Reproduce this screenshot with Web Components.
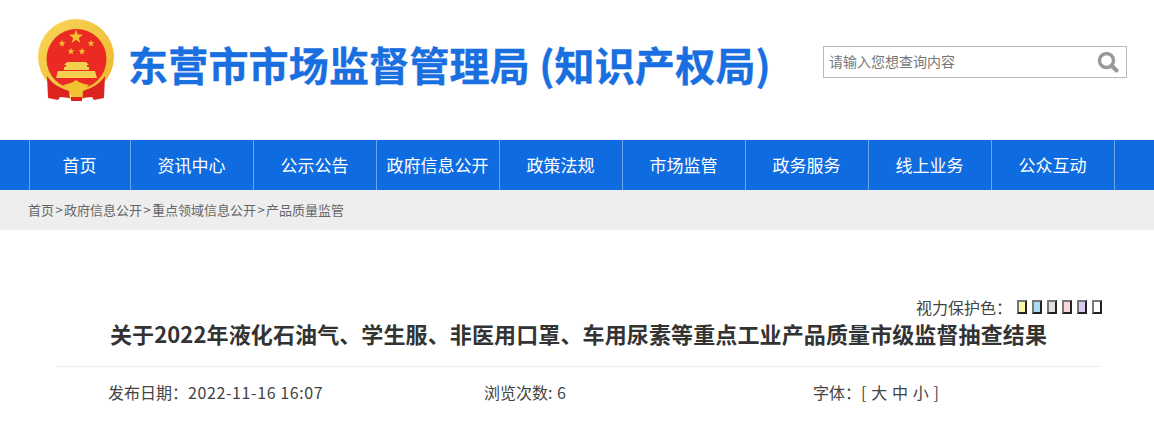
<!DOCTYPE html>
<html lang="zh">
<head>
<meta charset="utf-8">
<title>产品质量监管</title>
<style>
  html, body { margin: 0; padding: 0; background: #fff; overflow: hidden; }
  body { font-family: "Noto Sans CJK SC", "Liberation Sans", sans-serif; }
</style>
</head>
<body>
<site-header></site-header>
<site-nav></site-nav>
<bread-crumb></bread-crumb>
<article-head></article-head>

<script>
const CJK = '"Noto Sans CJK SC", "Liberation Sans", sans-serif';
const STAR = 'M0-1L.235-.324H.951L.371.124.588.809 0 .382-.588.809-.371.124-.951-.324H-.235Z';

class SiteHeader extends HTMLElement {
    connectedCallback() {
        const shadow = this.attachShadow({ mode: 'open' });
        shadow.innerHTML = `
      <style>
        :host { display: flex; height: 140px; box-sizing: border-box; align-items: flex-start; font-family: ${CJK}; }
        .emblem { width: 78px; height: 84px; margin: 18px 0 0 37px; flex: none; }
        h1 { margin: 35px 0 0 13px; font-size: 40px; line-height: 58px; font-weight: 700; color: #1a6fe0; white-space: nowrap; flex: none; letter-spacing: .2px; -webkit-text-stroke: .4px #1a6fe0; }
        .search { margin: 46px 27px 0 auto; width: 304px; height: 32px; box-sizing: border-box; border: 1px solid #bbb; display: flex; align-items: center; padding: 0 7px 0 5px; flex: none; }
        .search span { flex: 1; font-size: 14px; color: #777; position: relative; top: -1px; }
        svg { display: block; }
      </style>
      <svg class="emblem" viewBox="0 0 78 84">
        <defs>
          <linearGradient id="gold" x1="0" y1="0" x2="1" y2="1"><stop offset="0" stop-color="#f8d75a"/><stop offset="1" stop-color="#eeb52c"/></linearGradient>
        </defs>
        <circle cx="39" cy="39" r="38" fill="url(#gold)"/>
        <circle cx="39.500" cy="41" r="30" fill="#ec2a24"/>
        <g fill="#f2c230">
          <path d="${STAR}" transform="translate(39 19) scale(7.500)"/>
          <path d="${STAR}" transform="translate(25 25.500) scale(3.700)"/>
          <path d="${STAR}" transform="translate(54 25.500) scale(3.700)"/>
          <path d="${STAR}" transform="translate(34 33.500) scale(3.700)"/>
          <path d="${STAR}" transform="translate(45 33.500) scale(3.700)"/>
        </g>
        <g fill="#f5cf4e">
          <path d="M30 44h19l3 3h-2v2h2v3H27v-3h2v-2h-2z"/>
          <path d="M21 53h37l2 7H19z"/>
        </g>
        <path d="M10 58c5 8 13 12 22 15l1 7-10-1-2 3-10-2z" fill="#dd2320"/>
        <path d="M68 58c-5 8-13 12-22 15l-1 7 10-1 2 3 10-2z" fill="#dd2320"/>
        <path d="M26 67c5-1 9-2 13-5 4 3 8 4 13 5l-6 6-1 6 3 2H31l3-2-1-6z" fill="#f2c230"/>
        <path d="M34 79h11v4H34z" fill="#dd2320"/>
      </svg>
      <h1>东营市市场监督管理局 (知识产权局)</h1>
      <div class="search">
        <span>请输入您想查询内容</span>
        <svg width="22" height="22" viewBox="0 0 22 22"><circle cx="9.500" cy="9.500" r="7" fill="none" stroke="#999" stroke-width="3.500"/><path d="M14.500 14.500l5 5" stroke="#999" stroke-width="4" stroke-linecap="round"/></svg>
      </div>`;
    }
}

class NavItem extends HTMLElement {
    connectedCallback() {
        const shadow = this.attachShadow({ mode: 'open' });
        shadow.innerHTML = `
      <style>
        :host { display: flex; width: 122px; height: 50px; box-sizing: content-box; align-items: center; justify-content: center; border-left: 1px solid #6ba6f0; color: #fff; font-size: 17px; white-space: nowrap; flex: none; }
        :host([wide]) { width: 100px; }
        :host([last]) { border-right: 1px solid #6ba6f0; }
        span { position: relative; top: -1px; left: -.5px; }
      </style>
      <span><slot></slot></span>`;
    }
}

class SiteNav extends HTMLElement {
    connectedCallback() {
        const shadow = this.attachShadow({ mode: 'open' });
        const items = ['首页', '资讯中心', '公示公告', '政府信息公开', '政策法规', '市场监管', '政务服务', '线上业务', '公众互动'];
        shadow.innerHTML = `
      <style>
        :host { display: flex; height: 50px; background: #0f6ce0; padding-left: 29px; font-family: ${CJK}; }
      </style>
      ${items.map((t, i) => `<nav-item ${i === 0 ? 'wide' : ''} ${i === items.length - 1 ? 'last' : ''}>${t}</nav-item>`).join('')}`;
    }
}

class BreadCrumb extends HTMLElement {
    connectedCallback() {
        const shadow = this.attachShadow({ mode: 'open' });
        const parts = ['首页', '政府信息公开', '重点领域信息公开', '产品质量监管'];
        shadow.innerHTML = `
      <style>
        :host { display: flex; height: 40px; align-items: center; background: #eee; padding: 0 0 2px 28px; box-sizing: border-box; font-size: 13px; color: #666; font-family: ${CJK}; white-space: nowrap; }
        i { font-style: normal; padding: 0 1.4px; }
      </style>
      <div>${parts.join('<i>&gt;</i>')}</div>`;
    }
}

class ArticleHead extends HTMLElement {
    connectedCallback() {
        const shadow = this.attachShadow({ mode: 'open' });
        const colors = ['#faf5a8', '#a8dcf5', '#e0e0e0', '#fbd5dc', '#dfc8f2', '#ffffff'];
        shadow.innerHTML = `
      <style>
        :host { display: block; font-family: ${CJK}; color: #333; }
        .eye { display: flex; justify-content: flex-end; align-items: center; height: 18px; margin-top: 68px; padding-right: 52px; font-size: 16px; line-height: 18px; color: #444; }
        .eye span { font-family: "Liberation Sans", ${CJK}; position: relative; top: 2px; }
        .eye b { width: 6px; height: 10px; margin-left: 5px; border: 2px solid #444; border-right-color: #222; border-bottom-color: #222; border-left-color: #777; border-top-color: #777; }
        h2 { margin: -1px 53px 0 56px; padding: 0 0 14px; font-size: 22px; line-height: 37px; font-weight: 700; text-align: center; letter-spacing: .12px; color: #333; border-bottom: 1px solid #eee; white-space: nowrap; }
        .meta { display: flex; margin: 12px 0 0 108px; font-size: 16px; line-height: 26px; color: #444; }
        .meta span { flex: none; }
        .date { width: 376px; letter-spacing: .6px; }
        .date em { font-style: normal; letter-spacing: 0; }
        .views { width: 329px; }
        .views u { text-decoration: none; letter-spacing: .4px; margin-left: 1px; }
        .font u { text-decoration: none; letter-spacing: .6px; }
      </style>
      <div class="eye"><span>视力保护色：</span>${colors.map(c => `<b style="background:${c}"></b>`).join('')}</div>
      <h2>关于2022年液化石油气、学生服、非医用口罩、车用尿素等重点工业产品质量市级监督抽查结果</h2>
      <div class="meta">
        <span class="date"><em>发布日期：</em>2022-11-16 16:07</span>
        <span class="views">浏览次数: <u>6</u></span>
        <span class="font">字体：<u>[ 大 中 小 ]</u></span>
      </div>`;
    }
}

customElements.define('site-header', SiteHeader);
customElements.define('nav-item', NavItem);
customElements.define('site-nav', SiteNav);
customElements.define('bread-crumb', BreadCrumb);
customElements.define('article-head', ArticleHead);
</script>
</body>
</html>
